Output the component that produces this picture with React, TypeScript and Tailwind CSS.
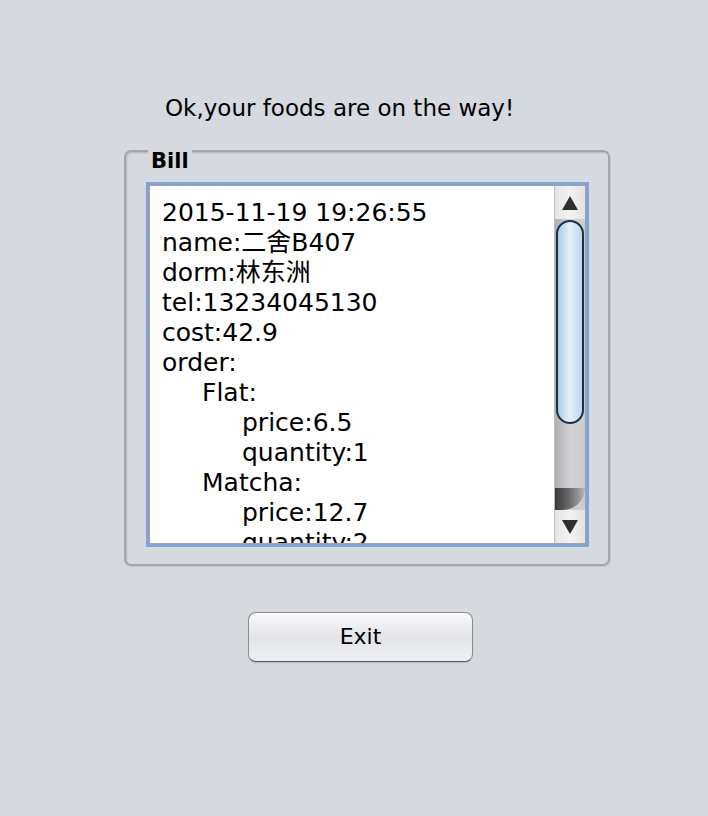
export default function App() {
  const lines = [
    { text: "2015-11-19 19:26:55", indent: 0 },
    { text: "name:二舍B407", indent: 0 },
    { text: "dorm:林东洲", indent: 0 },
    { text: "tel:13234045130", indent: 0 },
    { text: "cost:42.9", indent: 0 },
    { text: "order:", indent: 0 },
    { text: "Flat:", indent: 1 },
    { text: "price:6.5", indent: 2 },
    { text: "quantity:1", indent: 2 },
    { text: "Matcha:", indent: 1 },
    { text: "price:12.7", indent: 2 },
    { text: "quantity:2", indent: 2 },
    { text: "Mocha:", indent: 1 },
    { text: "price:11.0", indent: 2 },
    { text: "quantity:1", indent: 2 },
  ];

  return (
    <div className="w-[708px] h-[816px] bg-[#d6d9df] text-black font-['DejaVu_Sans','Noto_Sans_CJK_SC',sans-serif] pt-[93px]">
      <div className="pl-[165px] text-[23px] leading-[30px]">Ok,your foods are on the way!</div>

      {/* Bill group */}
      <div className="relative mt-[27px] ml-[124px] w-[486px] h-[416px] rounded-[7px] border-2 border-[#a4a5a8] shadow-[inset_1px_1px_0_#bdbec1,inset_2px_2px_0_#cbcdd1,1px_1px_0_#c4c6cb] pt-[30px] pl-[20px]">
        <span className="absolute left-[22px] top-[-2px] px-[3px] bg-[#d6d9df] font-bold text-[21px] leading-[22px]">
          Bill
        </span>

        <div className="w-[443px] h-[365px] border-[3px] border-[#7ea5d3] flex">
          <div className="flex-1 flex border border-[#a2a2a2] bg-white">
            <div className="flex-1 overflow-hidden pl-[12px] pt-[12px] text-[25px] leading-[30px]">
              {lines.map((l, i) => (
                <div
                  key={i}
                  className={l.indent === 2 ? "pl-[80px]" : l.indent === 1 ? "pl-[40px]" : ""}
                >
                  {l.text}
                </div>
              ))}
            </div>

            {/* scrollbar */}
            <div className="w-[31px] flex flex-col border-l border-[#bdbdbd]">
              <div className="h-[33px] flex items-center justify-center bg-gradient-to-r from-[#e4e4e4] via-[#f3f3f3] to-[#e2e2e2]">
                <svg width="16" height="14" viewBox="0 0 16 14">
                  <path d="M8 0 L16 14 L0 14 Z" fill="#2e2e2e" />
                </svg>
              </div>
              <div className="flex-1 flex flex-col bg-gradient-to-r from-[#aeaeb0] via-[#d2d2d5] to-[#cdcdd1]">
                <div className="mt-[1px] ml-[1px] mr-[1px] h-[204px] rounded-[15px] border-2 border-[#1e3048] bg-gradient-to-r from-[#aecbe4] via-[#e6f0f9] to-[#bcd6ec]" />
                <div className="flex-1" />
                <div className="h-[22px] rounded-br-[28px] bg-gradient-to-r from-[#3a3a3c] via-[#6e6e70] to-[#b8b8bb]" />
              </div>
              <div className="h-[33px] flex items-center justify-center bg-gradient-to-r from-[#e4e4e4] via-[#f3f3f3] to-[#e2e2e2]">
                <svg width="16" height="14" viewBox="0 0 16 14">
                  <path d="M0 0 L16 0 L8 14 Z" fill="#2e2e2e" />
                </svg>
              </div>
            </div>
          </div>
        </div>
      </div>

      <button className="block mt-[46px] ml-[248px] w-[225px] h-[50px] rounded-[8px] border border-[#8c8c8c] border-b-[#5a5a5a] bg-gradient-to-b from-[#fbfbfc] via-[#e3e4e8] to-[#eef0f4] shadow-[0_1px_1px_rgba(0,0,0,0.15)] text-[22px] leading-[30px] text-black">
        Exit
      </button>
    </div>
  );
}
